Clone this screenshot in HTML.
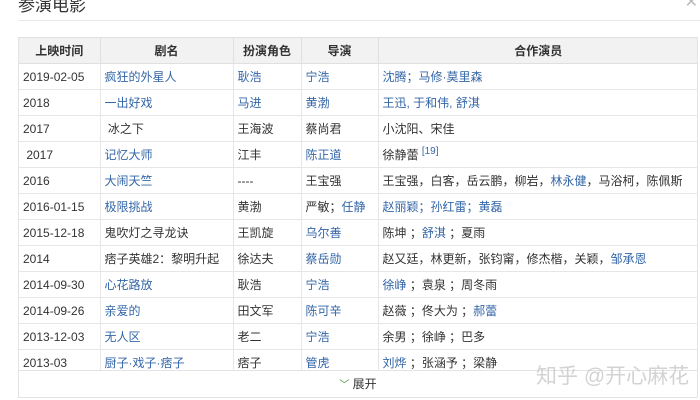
<!DOCTYPE html>
<html><head><meta charset="utf-8"><style>
*{margin:0;padding:0;box-sizing:border-box}
body{width:700px;height:400px;background:#fff;overflow:hidden;position:relative;font-family:"Liberation Sans","Noto Sans CJK SC",sans-serif;font-size:12px;color:#333}
.title{position:absolute;left:18px;top:-9px;font-size:17px;color:#333}
.close{position:absolute;right:2px;top:-8px;color:#bbb;font-size:16px}
.hr{position:absolute;left:18px;right:0;top:20px;border-top:1px solid #e8e8e8}
.box{position:absolute;left:18px;top:37px;width:680px;height:361px;border:1px solid #e3e3e3;border-top:none}
.wrap{height:334px;overflow:hidden;border-bottom:1px solid #e3e3e3}
table{border-collapse:collapse;width:680px;table-layout:fixed}
td,th{height:26px;border:1px solid #e6e6e6;padding:0 4px;white-space:nowrap;overflow:hidden}
th{background:#f2f2f2;font-weight:bold;text-align:center;color:#333;border-color:#e0e0e0}
tr>:first-child{border-left:none}
a{color:#3366a8;text-decoration:none}
sup{color:#3366a8;font-size:10px}
.more{text-align:center;height:26px;line-height:26px;color:#333}
.more b{color:#3a8a3a;font-weight:normal;font-size:10px}
.wm{position:absolute;left:536px;top:360px;font-size:21px;color:rgba(200,200,200,0.8)}
</style></head><body>
<div class="title">参演电影</div><div class="close">✕</div>
<div class="hr"></div>
<div class="box"><div class="wrap"><table>
<colgroup><col style="width:81px"><col style="width:133px"><col style="width:68px"><col style="width:77px"><col></colgroup>
<tr><th>上映时间</th><th>剧名</th><th>扮演角色</th><th>导演</th><th>合作演员</th></tr>
<tr><td>2019-02-05</td><td><a>疯狂的外星人</a></td><td><a>耿浩</a></td><td><a>宁浩</a></td><td><a>沈腾；马修·莫里森</a></td></tr>
<tr><td>2018</td><td><a>一出好戏</a></td><td><a>马进</a></td><td><a>黄渤</a></td><td><a>王迅, 于和伟, 舒淇</a></td></tr>
<tr><td>2017</td><td>&nbsp;冰之下</td><td>王海波</td><td>蔡尚君</td><td>小沈阳、宋佳</td></tr>
<tr><td>&nbsp;2017</td><td><a>记忆大师</a></td><td>江丰</td><td><a>陈正道</a></td><td>徐静蕾 <sup>[19]</sup></td></tr>
<tr><td>2016</td><td><a>大闹天竺</a></td><td>----</td><td>王宝强</td><td>王宝强，白客，岳云鹏，柳岩，<a>林永健</a>，马浴柯，陈佩斯</td></tr>
<tr><td>2016-01-15</td><td><a>极限挑战</a></td><td>黄渤</td><td>严敏；<a>任静</a></td><td><a>赵丽颖；孙红雷；黄磊</a></td></tr>
<tr><td>2015-12-18</td><td>鬼吹灯之寻龙诀</td><td>王凯旋</td><td><a>乌尔善</a></td><td>陈坤 ；<a>舒淇</a> ；夏雨</td></tr>
<tr><td>2014</td><td>痞子英雄2：黎明升起</td><td>徐达夫</td><td><a>蔡岳勋</a></td><td>赵又廷，林更新，张钧甯，修杰楷，关颖，<a>邹承恩</a></td></tr>
<tr><td>2014-09-30</td><td><a>心花路放</a></td><td>耿浩</td><td><a>宁浩</a></td><td><a>徐峥</a> ；袁泉 ；周冬雨</td></tr>
<tr><td>2014-09-26</td><td><a>亲爱的</a></td><td>田文军</td><td><a>陈可辛</a></td><td>赵薇 ；佟大为 ；<a>郝蕾</a></td></tr>
<tr><td>2013-12-03</td><td><a>无人区</a></td><td>老二</td><td><a>宁浩</a></td><td>余男 ；徐峥 ；巴多</td></tr>
<tr><td>2013-03</td><td><a>厨子·戏子·痞子</a></td><td>痞子</td><td><a>管虎</a></td><td><a>刘烨</a> ；张涵予 ；梁静</td></tr>
</table></div>
<div class="more"><b>﹀</b> 展开</div></div>
<div class="wm">知乎 @开心麻花</div>
</body></html>
